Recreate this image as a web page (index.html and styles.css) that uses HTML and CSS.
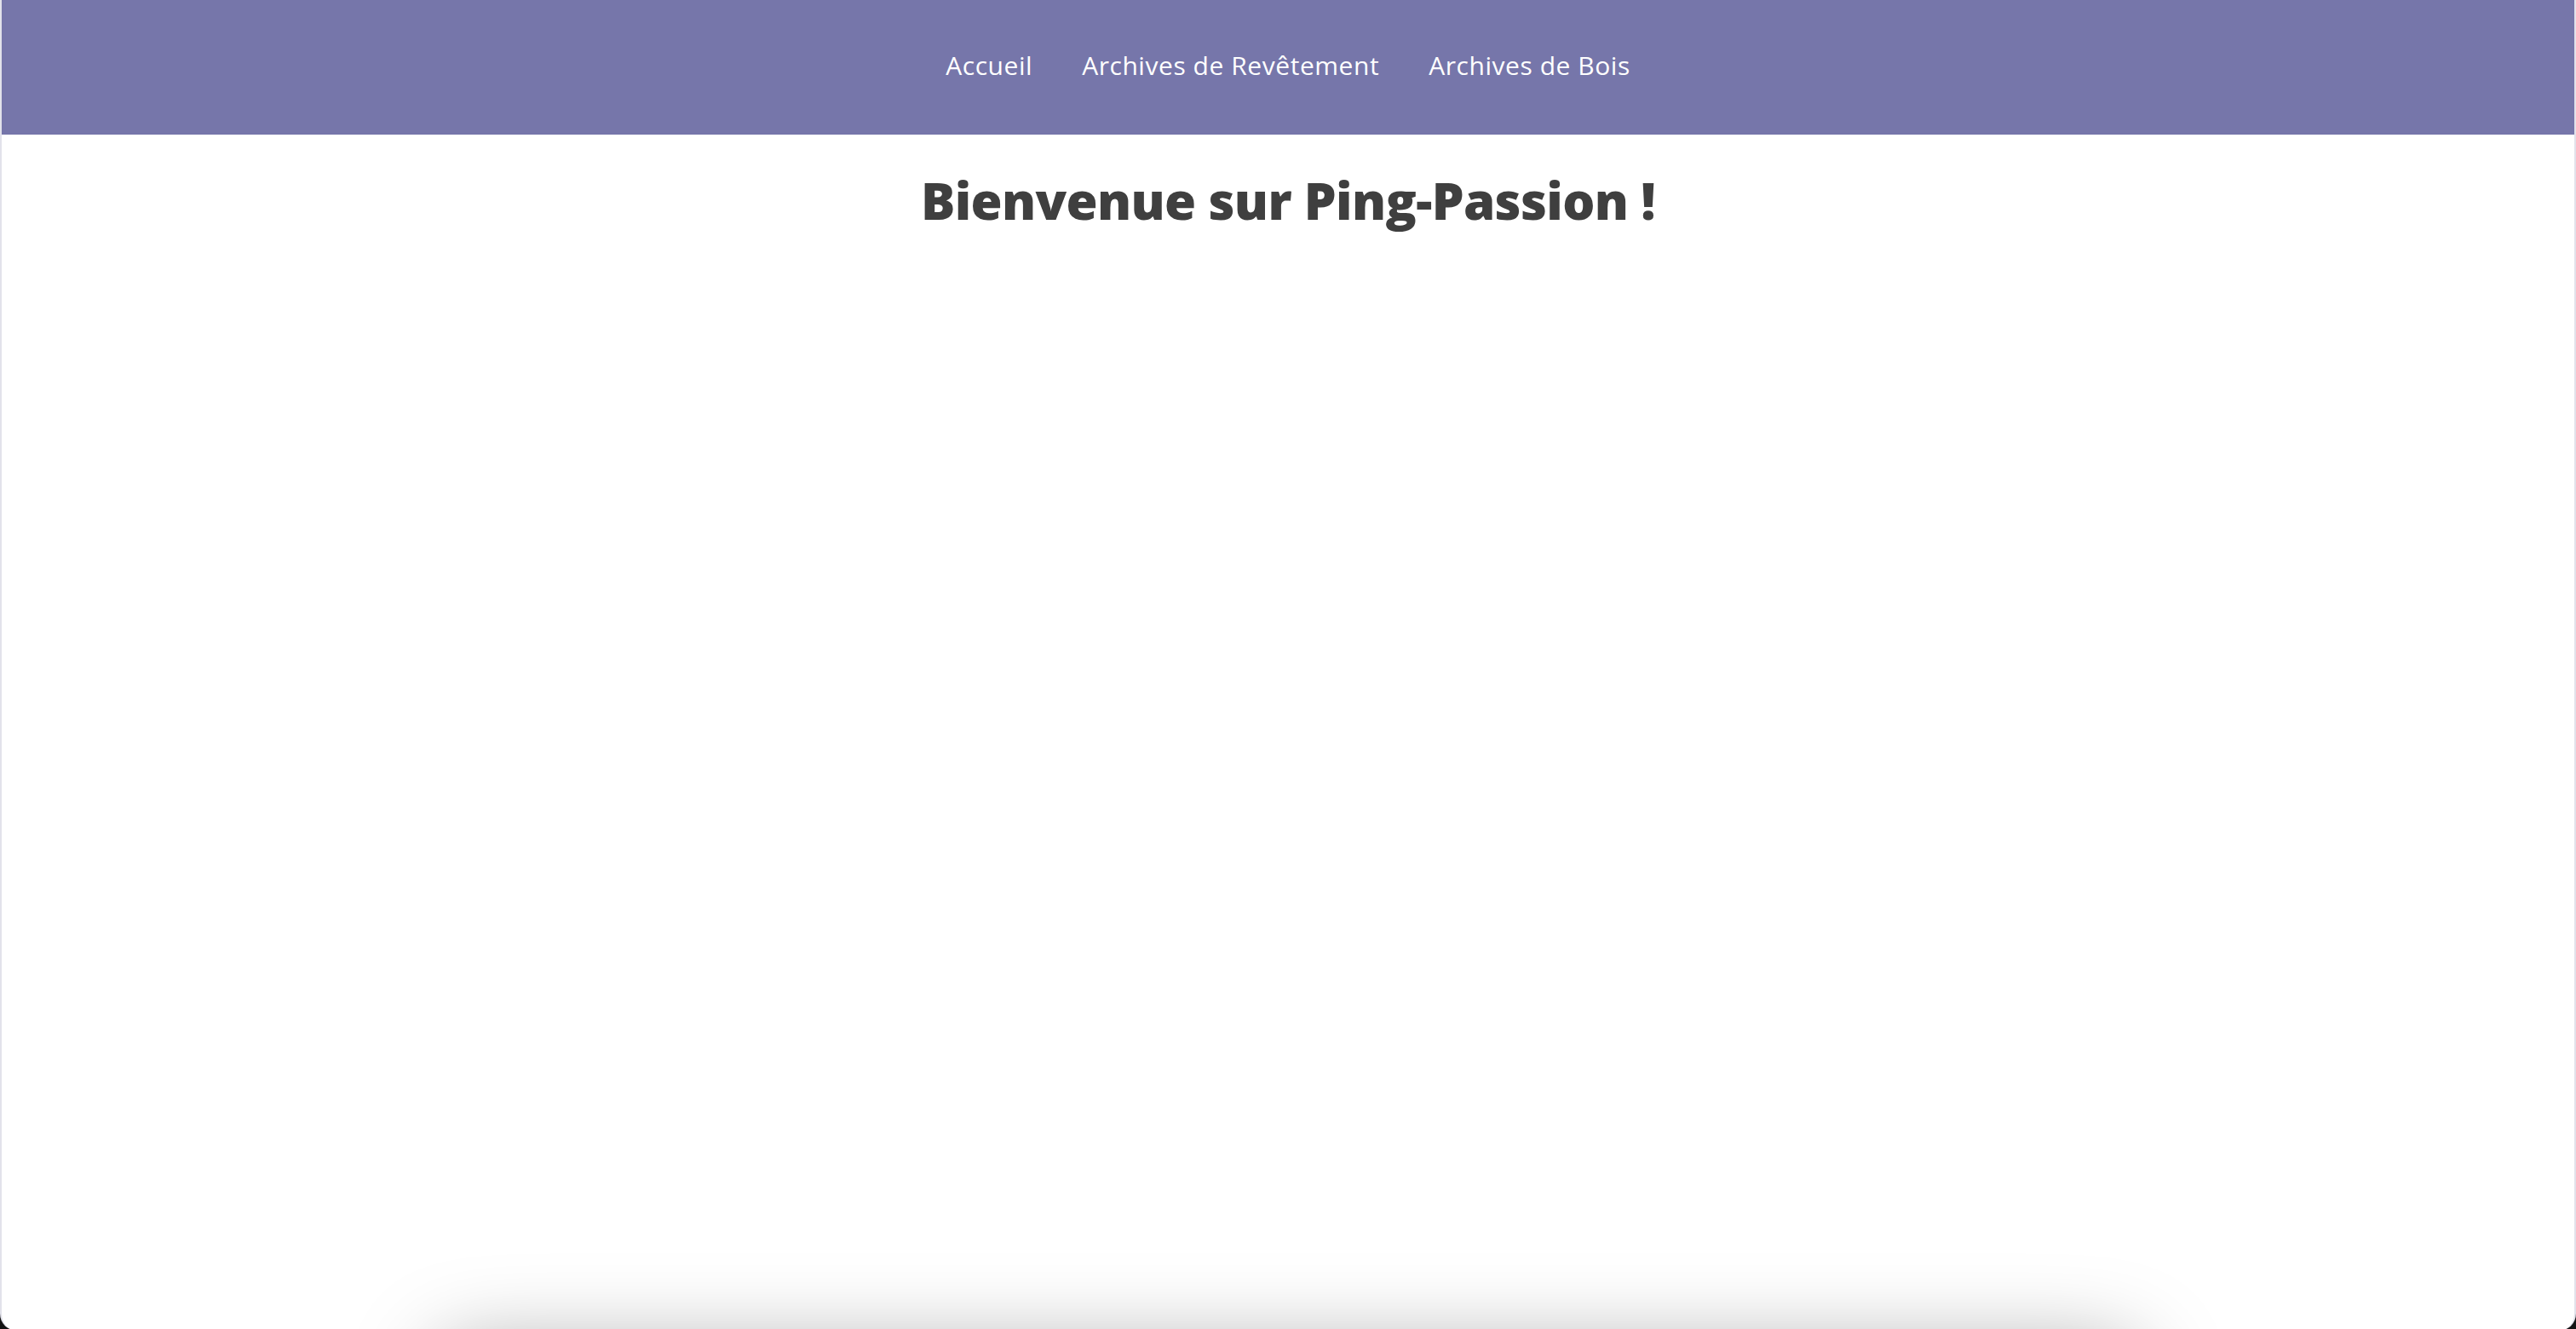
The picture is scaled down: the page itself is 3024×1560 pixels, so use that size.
FILE: index.html
```html
<!DOCTYPE html>
<html lang="fr">
<head>
<meta charset="utf-8">
<title>Ping-Passion</title>
<link rel="stylesheet" href="styles.css">
</head>
<body>
<div class="page">
  <header class="site-header">
    <nav class="main-nav">
      <a href="#" class="nav-link">Accueil</a>
      <a href="#" class="nav-link">Archives de Revêtement</a>
      <a href="#" class="nav-link">Archives de Bois</a>
    </nav>
  </header>
  <main class="content">
    <h1 class="title">Bienvenue sur Ping-Passion !</h1>
  </main>
  <section class="card"></section>
</div>
</body>
</html>
```

FILE: styles.css
```css
html {
  background: #141414;
  margin: 0;
  padding: 0;
  height: 100%;
}
body {
  margin: 0;
  padding: 0;
  height: 100vh;
  overflow: hidden;
  font-family: "Open Sans", "Liberation Sans", sans-serif;
}
.page {
  height: calc(100vh + 2px);
  background: #ffffff;
  border-radius: 0 0 20px 20px;
  overflow: hidden;
  display: flex;
  flex-direction: column;
  box-sizing: border-box;
  border-left: 2px solid rgba(190, 190, 210, 0.45);
  border-right: 2px solid rgba(190, 190, 210, 0.45);
}
.site-header {
  flex: 0 0 158px;
  background: #7676aa;
  display: flex;
  align-items: center;
  justify-content: center;
}
.main-nav {
  display: flex;
  gap: 58px;
  align-items: center;
  padding-bottom: 4px;
}
.nav-link {
  color: #ffffff;
  text-decoration: none;
  font-size: 30px;
  letter-spacing: 0.55px;
  line-height: 1;
}
.content {
  flex: 1 0 auto;
  display: flex;
  flex-direction: column;
  align-items: center;
}
.title {
  margin: 36px 0 0;
  font-size: 60px;
  font-weight: 800;
  color: #3f3f3f;
  letter-spacing: -0.65px;
}
.card {
  flex: 0 0 300px;
  width: 2000px;
  align-self: center;
  margin-bottom: -320px;
  background: #ffffff;
  border-radius: 40px;
  box-shadow: 0 0 100px rgba(0, 0, 0, 0.35);
}
```
